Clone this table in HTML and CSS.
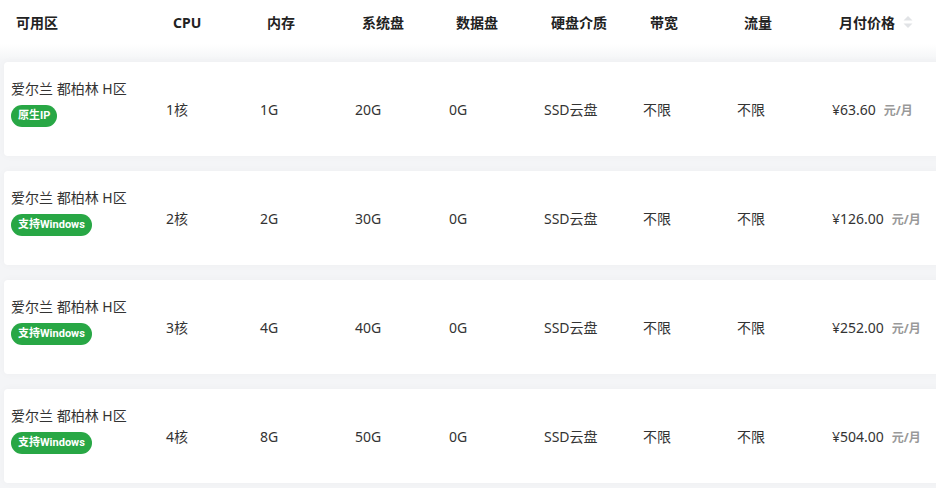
FILE: index.html
```html
<!DOCTYPE html>
<html lang="zh-CN">
<head>
<meta charset="utf-8">
<link rel="stylesheet" href="styles.css">
</head>
<body>
<div class="table">
  <div class="head">
    <div>可用区</div>
    <div>CPU</div>
    <div>内存</div>
    <div>系统盘</div>
    <div>数据盘</div>
    <div>硬盘介质</div>
    <div>带宽</div>
    <div>流量</div>
    <div class="sortable">月付价格
      <svg class="sort" width="10" height="14" viewBox="0 0 10 14"><path d="M5 1 L9.5 5.5 H0.5 Z" fill="#e1e3e6"/><path d="M5 13 L9.5 8.5 H0.5 Z" fill="#e1e3e6"/></svg>
    </div>
  </div>
  <div class="rows">
    <div class="row">
      <div class="zone"><div class="loc">爱尔兰 都柏林 H区</div><span class="badge">原生IP</span></div>
      <div>1核</div><div>1G</div><div>20G</div><div>0G</div><div>SSD云盘</div><div>不限</div><div>不限</div>
      <div class="price">¥63.60<span class="unit">元/月</span></div>
    </div>
    <div class="row">
      <div class="zone"><div class="loc">爱尔兰 都柏林 H区</div><span class="badge">支持Windows</span></div>
      <div>2核</div><div>2G</div><div>30G</div><div>0G</div><div>SSD云盘</div><div>不限</div><div>不限</div>
      <div class="price">¥126.00<span class="unit">元/月</span></div>
    </div>
    <div class="row">
      <div class="zone"><div class="loc">爱尔兰 都柏林 H区</div><span class="badge">支持Windows</span></div>
      <div>3核</div><div>4G</div><div>40G</div><div>0G</div><div>SSD云盘</div><div>不限</div><div>不限</div>
      <div class="price">¥252.00<span class="unit">元/月</span></div>
    </div>
    <div class="row">
      <div class="zone"><div class="loc">爱尔兰 都柏林 H区</div><span class="badge">支持Windows</span></div>
      <div>4核</div><div>8G</div><div>50G</div><div>0G</div><div>SSD云盘</div><div>不限</div><div>不限</div>
      <div class="price">¥504.00<span class="unit">元/月</span></div>
    </div>
  </div>
</div>
</body>
</html>
```
FILE: styles.css
```css
html, body {
  margin: 0;
  padding: 0;
  background: #fff;
  overflow: hidden;
}
body {
  width: 936px;
  height: 488px;
  font-family: "Noto Sans", "Noto Sans CJK SC", sans-serif;
  font-size: 14px;
  color: #333;
}
.table {
  width: 980px;
}
.head {
  display: grid;
  grid-template-columns: 157px 94px 95px 94px 95px 99px 94px 95px 1fr;
  align-items: center;
  height: 44px;
  padding-left: 16px;
  font-weight: bold;
  color: #222;
  background: #fff;
}
.sortable {
  display: flex;
  align-items: center;
}
.sort {
  margin-left: 8px;
}
.rows {
  background: linear-gradient(#fff 0, #f4f5f7 16px);
  padding: 18px 0 20px 4px;
  display: flex;
  flex-direction: column;
  gap: 15px;
}
.row {
  display: grid;
  grid-template-columns: 155px 94px 95px 94px 95px 99px 94px 95px 1fr;
  align-items: center;
  height: 94px;
  padding-left: 7px;
  background: #fff;
  border-radius: 4px;
  box-shadow: 0 0 8px rgba(0, 0, 0, 0.03);
}
.zone {
  align-self: start;
  padding-top: 17px;
}
.loc {
  line-height: 20px;
}
.badge {
  display: inline-block;
  margin-top: 6px;
  height: 22px;
  line-height: 22px;
  padding: 0 7px;
  border-radius: 11px;
  background: #28a745;
  color: #fff;
  font-family: Roboto, "Noto Sans CJK SC", sans-serif;
  font-size: 11px;
  font-weight: bold;
}
.price {
  display: flex;
  align-items: baseline;
}
.unit {
  margin-left: 8px;
  font-size: 12px;
  font-weight: bold;
  color: #999;
}
```
